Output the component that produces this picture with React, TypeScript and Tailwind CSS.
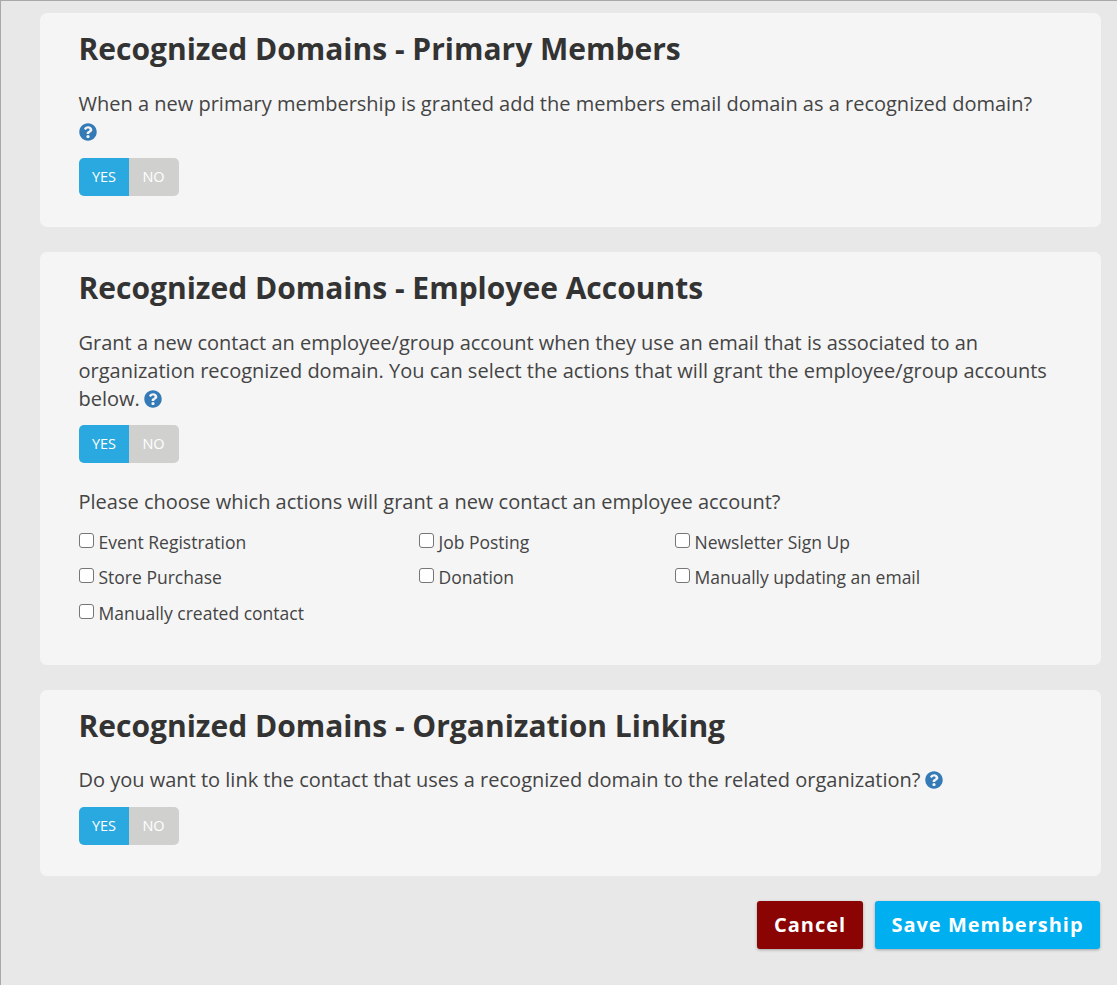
import { FaQuestionCircle } from "react-icons/fa";

function Help({ tight }: { tight?: boolean }) {
  return <FaQuestionCircle className={`${tight ? "-ml-[1px]" : ""} inline-block h-[18px] w-[18px] align-[-2px] text-[#337ab7]`} />;
}

function YesNo() {
  return (
    <div className="flex h-[38px] w-[100px] overflow-hidden rounded-[5px] text-[14.5px] leading-[37px] text-white">
      <span className="w-[50px] bg-[#2aa9e0] pl-[1px] text-center">YES</span>
      <span className="w-[50px] bg-[#d0d1cf] text-center">NO</span>
    </div>
  );
}

function Check({ label }: { label: string }) {
  return (
    <label className="flex items-start text-[17.5px] leading-[28px] text-[#444]">
      <input type="checkbox" className="mr-[5px] mt-[5px] h-[15px] w-[15px] appearance-none rounded-[3px] border-[1.5px] border-[#767676] bg-white" />
      {label}
    </label>
  );
}

export default function App() {
  return (
    <div className="flex h-[985px] flex-col gap-[25px] overflow-hidden border-l border-t border-[#a9a9a9] bg-[#e8e8e8] pl-[39px] pr-4 pt-3 font-['Open_Sans',sans-serif] text-[20px] leading-[28px] text-[#444]">
      <section className="h-[214px] rounded-[7px] bg-[#f5f5f5] px-[38.5px] pt-4">
        <h2 className="text-[30px] font-bold leading-[40px] text-[#333]">Recognized Domains - Primary Members</h2>
        <p className="mt-[21px]">
          When a new primary membership is granted add the members email domain as a recognized domain?
          <br />
          <Help />
        </p>
        <div className="mt-[12px]"><YesNo /></div>
      </section>

      <section className="h-[413px] rounded-[7px] bg-[#f5f5f5] px-[38.5px] pt-4">
        <h2 className="text-[30px] font-bold leading-[40px] text-[#333]">Recognized Domains - Employee Accounts</h2>
        <p className="mt-[21px]">
          Grant a new contact an employee/group account when they use an email that is associated to an organization recognized domain. You can select the actions that will grant the employee/group accounts below. <Help tight />
        </p>
        <div className="mt-[12px]"><YesNo /></div>
        <p className="mt-[25px]">Please choose which actions will grant a new contact an employee account?</p>
        <div className="mt-[12px] grid grid-cols-[340px_256px_1fr] grid-rows-[35px_36px_35px]">
          <Check label="Event Registration" />
          <Check label="Job Posting" />
          <Check label="Newsletter Sign Up" />
          <Check label="Store Purchase" />
          <Check label="Donation" />
          <Check label="Manually updating an email" />
          <Check label="Manually created contact" />
        </div>
      </section>

      <section className="h-[186px] rounded-[7px] bg-[#f5f5f5] px-[38.5px] pt-4">
        <h2 className="text-[30px] font-bold leading-[40px] text-[#333]">Recognized Domains - Organization Linking</h2>
        <p className="mt-[20px]">
          Do you want to link the contact that uses a recognized domain to the related organization? <Help tight />
        </p>
        <div className="mt-[13px]"><YesNo /></div>
      </section>

      <div className="mr-[1px] flex justify-end gap-[12px]">
        <button className="h-[48px] w-[106px] rounded-[3px] bg-[#8b0404] text-[20px] font-bold tracking-[1px] text-white shadow-[0_1px_3px_rgba(0,0,0,0.3)]">Cancel</button>
        <button className="h-[48px] w-[225px] rounded-[3px] bg-[#00aff0] text-[20px] font-bold tracking-[1px] text-white shadow-[0_1px_3px_rgba(0,0,0,0.3)]">Save Membership</button>
      </div>
    </div>
  );
}
